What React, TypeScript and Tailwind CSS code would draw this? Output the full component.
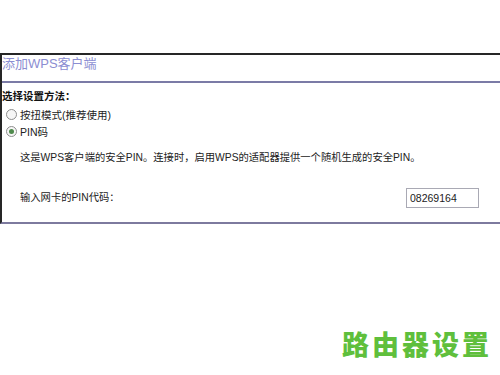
const font = "font-['Liberation_Sans','Noto_Sans_CJK_SC',sans-serif]";

const Radio = ({ checked, label }: { checked?: boolean; label: string }) => (
  <label className="flex items-center h-[17px] pl-[4px]">
    <span className="w-[11px] h-[11px] rounded-full border border-[#8e8e8e] bg-[#f6f6f6] flex items-center justify-center">
      {checked && <span className="w-[5px] h-[5px] rounded-full bg-[#4f8a4c]" />}
    </span>
    <span className="ml-[3px] text-[10.5px] leading-[14px] text-[#222]">{label}</span>
  </label>
);

export default function App() {
  return (
    <div className={`w-[500px] h-[375px] bg-white overflow-hidden relative ${font}`}>
      <div className="mt-[53px] border-t-2 border-l-2 border-[#262626] border-b-2 border-b-[#7d7a9e]">
        <div className="h-[26px] pt-[1px]">
          <h1 className="text-[13px] leading-[15px] text-[#8c8ed2]">添加WPS客户端</h1>
        </div>
        <div className="border-t-2 border-[#7b7ba6]" />
        <div className="pt-[6px] pb-[14px]">
          <div className="text-[10.5px] leading-[14px] font-bold text-[#111]">选择设置方法：</div>
          <div className="mt-[3px]">
            <Radio label="按扭模式(推荐使用)" />
            <Radio checked label="PIN码" />
          </div>
          <p className="mt-[11px] ml-[18px] text-[10.3px] leading-[14px] text-[#222]">
            这是WPS客户端的安全PIN。连接时，启用WPS的适配器提供一个随机生成的安全PIN。
          </p>
          <div className="mt-[23px] ml-[18px] flex items-center h-[20px]">
            <span className="w-[386px] text-[10.3px] leading-[14px] text-[#222]">输入网卡的PIN代码：</span>
            <input
              readOnly
              value="08269164"
              className="w-[73px] h-[20px] border border-[#a9a9b4] px-[3px] text-[10.5px] text-[#222] outline-none"
            />
          </div>
        </div>
      </div>
      <div className="absolute left-[342px] top-[329px] text-[27px] leading-[30px] font-black tracking-[3px] text-[#5fbf3c] font-['Noto_Sans_CJK_SC',sans-serif]">
        路由器设置
      </div>
    </div>
  );
}
